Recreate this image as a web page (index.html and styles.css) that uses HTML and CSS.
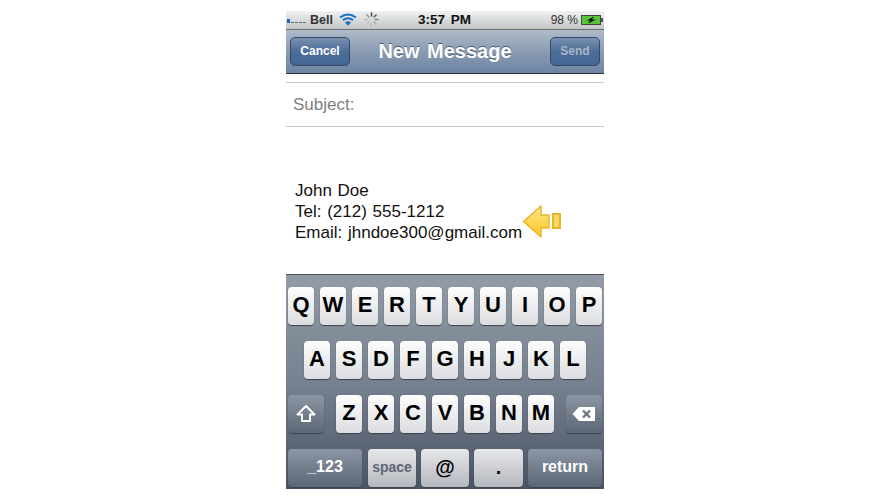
FILE: index.html
```html
<!DOCTYPE HTML>
<html>
<head>
<meta charset="utf-8">
<title>New Message</title>
<link rel="stylesheet" href="styles.css">
</head>
<body>
<div class="phone">
  <div class="status-bar">
    <div class="status-left">
      <svg class="signal" width="22" height="6" viewBox="0 0 22 6">
        <rect x="1" y="1" width="3" height="4" fill="#1f66c4"/>
        <rect x="5" y="4" width="3" height="1" fill="#5a6a7a"/>
        <rect x="9" y="4" width="3" height="1" fill="#5a6a7a"/>
        <rect x="13" y="4" width="3" height="1" fill="#5a6a7a"/>
        <rect x="17" y="4" width="3" height="1" fill="#5a6a7a"/>
      </svg>
      <span class="carrier">Bell</span>
      <svg class="wifi" width="18" height="13" viewBox="0 0 18 13">
        <path d="M1 4.500 Q9 -1.500 17 4.500" fill="none" stroke="#1e6fc4" stroke-width="2"/>
        <path d="M3.800 7.300 Q9 3.200 14.200 7.300" fill="none" stroke="#1e6fc4" stroke-width="2"/>
        <path d="M6 9.500 Q9 7.200 12 9.500 L9 12.800 Z" fill="#1e6fc4"/>
      </svg>
      <svg class="spinner" width="15" height="15" viewBox="0 0 15 15" stroke-width="1.500" stroke-linecap="round">
        <path d="M7.500 1V4" stroke="#444"/>
        <path d="M12.100 2.900L10 5" stroke="#666"/>
        <path d="M14 7.500H11" stroke="#888"/>
        <path d="M12.100 12.100L10 10" stroke="#aaa"/>
        <path d="M7.500 14V11" stroke="#bbb"/>
        <path d="M2.900 12.100L5 10" stroke="#c4c4c4"/>
        <path d="M1 7.500H4" stroke="#bbb"/>
        <path d="M2.900 2.900L5 5" stroke="#999"/>
      </svg>
    </div>
    <div class="clock">3:57 PM</div>
    <div class="status-right">
      <span class="percent">98 %</span>
      <svg class="battery" width="22" height="10" viewBox="0 0 22 10">
        <rect x="0.500" y="0.500" width="19" height="9" fill="#58c43e" stroke="#444"/>
        <rect x="20" y="3" width="2" height="4" fill="#555"/>
        <path d="M13 1.500L5.500 5.600H9L7 8.500L15 4.400H11Z" fill="#111"/>
      </svg>
    </div>
  </div>

  <div class="nav-bar">
    <div class="nav-btn">Cancel</div>
    <div class="nav-title">New Message</div>
    <div class="nav-btn nav-btn-off">Send</div>
  </div>

  <div class="message">
    <div class="field-gap"></div>
    <div class="field">Subject:</div>
    <div class="body-text">
      <div>John Doe</div>
      <div>Tel: (212) 555-1212</div>
      <div class="mail-line">Email: jhndoe300@gmail.com
        <svg class="arrow" width="40" height="36" viewBox="0 0 40 36">
          <defs>
            <linearGradient id="gold" x1="0" y1="0" x2="0" y2="1">
              <stop offset="0" stop-color="#ffe88a"/>
              <stop offset="1" stop-color="#fbc41e"/>
            </linearGradient>
          </defs>
          <path d="M1.500 17.500L19 2V11H27V24H19V33Z" fill="url(#gold)" stroke="#e9b52c" stroke-width="1.500" stroke-linejoin="round"/>
          <rect x="31" y="10" width="7" height="14" fill="#fdd860" stroke="#eab42a" stroke-width="2"/>
        </svg>
      </div>
    </div>
  </div>

  <div class="keyboard">
    <div class="key-row">
      <div class="key">Q</div><div class="key">W</div><div class="key">E</div><div class="key">R</div><div class="key">T</div>
      <div class="key">Y</div><div class="key">U</div><div class="key">I</div><div class="key">O</div><div class="key">P</div>
    </div>
    <div class="key-row">
      <div class="key">A</div><div class="key">S</div><div class="key">D</div><div class="key">F</div><div class="key">G</div>
      <div class="key">H</div><div class="key">J</div><div class="key">K</div><div class="key">L</div>
    </div>
    <div class="key-row row-three">
      <div class="key key-dark key-side">
        <svg width="20" height="20" viewBox="0 0 20 20">
          <path d="M10 2L18.500 10.500H14V17H6V10.500H1.500Z" fill="none" stroke="#fff" stroke-width="2" stroke-linejoin="round"/>
        </svg>
      </div>
      <div class="letters">
        <div class="key">Z</div><div class="key">X</div><div class="key">C</div><div class="key">V</div>
        <div class="key">B</div><div class="key">N</div><div class="key">M</div>
      </div>
      <div class="key key-dark key-side">
        <svg width="24" height="16" viewBox="0 0 24 16">
          <path d="M7 1H23V15H7L0.500 8Z" fill="#fff"/>
          <path d="M11 4.500L18 11.500M18 4.500L11 11.500" stroke="#6b7482" stroke-width="2.400"/>
        </svg>
      </div>
    </div>
    <div class="key-row row-four">
      <div class="key key-dark key-wide label-num">_123</div>
      <div class="key key-space">space</div>
      <div class="key key-at">@</div>
      <div class="key key-dot">.</div>
      <div class="key key-dark key-wide key-return">return</div>
    </div>
  </div>
</div>
</body>
</html>
```

FILE: styles.css
```css
body {
  margin: 0;
  background-color: white;
  font-family: "Liberation Sans", Arial, sans-serif;
}

.phone {
  width: 318px;
  margin: 11px auto 0;
  position: relative;
  left: 0.5px;
}

.status-bar {
  height: 17px;
  padding-bottom: 1px;
  display: flex;
  align-items: center;
  justify-content: space-between;
  background: linear-gradient(#eff2f1, #c3c6c6);
  border-bottom: 1px solid #6d7176;
  color: #222;
  position: relative;
}

.status-left {
  display: flex;
  align-items: center;
}

.signal {
  margin-top: 3px;
}

.carrier {
  font-size: 12.500px;
  font-weight: bold;
  color: #333;
  margin-left: 2px;
}

.wifi {
  margin-left: 6px;
}

.spinner {
  margin-left: 7px;
}

.clock {
  position: absolute;
  left: 132px;
  font-size: 13.500px;
  font-weight: bold;
  word-spacing: 2px;
  color: #111;
}

.status-right {
  display: flex;
  align-items: center;
  padding-right: 1px;
}

.percent {
  font-size: 12px;
  color: #333;
  margin-right: 3px;
}

.nav-bar {
  height: 43px;
  display: flex;
  align-items: center;
  justify-content: space-between;
  padding: 0 4px;
  background: linear-gradient(#b0bbc9, #8a9bb2 50%, #6d84a2);
  border-bottom: 1px solid #2d3642;
}

.nav-btn {
  width: 58px;
  height: 27px;
  line-height: 27px;
  text-align: center;
  font-size: 12px;
  font-weight: bold;
  color: white;
  background: linear-gradient(#7890ae, #4d6d99 50%, #446794);
  border: 1px solid #34496a;
  border-radius: 5px;
}

.nav-btn-off {
  width: 48px;
  color: #a9b7c9;
}

.nav-title {
  font-size: 20px;
  font-weight: bold;
  color: white;
  word-spacing: 2px;
  text-shadow: 0 -1px 0 #4a5a70;
  margin-right: 15px;
  margin-left: 5px;
}

.message {
  height: 200px;
  background-color: white;
}

.field-gap {
  height: 8px;
}

.field {
  height: 43px;
  line-height: 43px;
  border-top: 1px solid #c6c6c6;
  border-bottom: 1px solid #c6c6c6;
  padding-left: 7px;
  font-size: 17px;
  color: #808080;
}

.body-text {
  padding: 53px 0 0 9px;
  font-size: 17px;
  word-spacing: 1px;
  line-height: 21px;
  color: #111;
}

.mail-line {
  position: relative;
}

.arrow {
  position: absolute;
  left: 227px;
  top: -18px;
}

.keyboard {
  height: 215px;
  padding-top: 12px;
  box-sizing: border-box;
  border-top: 1px solid #4a5058;
  background: linear-gradient(#929ba6, #77818f 50%, #4a5362);
}

.key-row {
  display: flex;
  justify-content: center;
  gap: 6px;
  margin-bottom: 16px;
}

.letters {
  display: flex;
  gap: 6px;
}

.row-three {
  padding: 0 2px;
  justify-content: space-between;
}

.row-four {
  padding: 0 2px;
  gap: 5px;
  margin-bottom: 0;
}

.key {
  width: 26px;
  height: 38px;
  line-height: 36px;
  text-align: center;
  font-size: 22px;
  font-weight: bold;
  color: black;
  background: linear-gradient(#fdfdfd, #dcdde0);
  border-radius: 4px;
  box-shadow: 0 1px 1px #3c4450;
}

.key-dark {
  color: white;
  background: linear-gradient(#8b95a3, #5c6776);
  font-size: 16px;
}

.key-side {
  width: 36px;
  display: flex;
  align-items: center;
  justify-content: center;
}

.key-wide {
  width: 74px;
}

.label-num {
  margin-right: 1px;
}

.key-space {
  width: 48px;
  font-size: 14px;
  color: #5d6674;
  background: linear-gradient(#e6e7ea, #b4b7bd);
}

.key-at {
  width: 48px;
  font-size: 20px;
  background: linear-gradient(#e6e7ea, #b4b7bd);
}

.key-dot {
  width: 49px;
  font-size: 20px;
  background: linear-gradient(#e6e7ea, #b4b7bd);
}

.key-return {
  font-size: 16px;
}
```
